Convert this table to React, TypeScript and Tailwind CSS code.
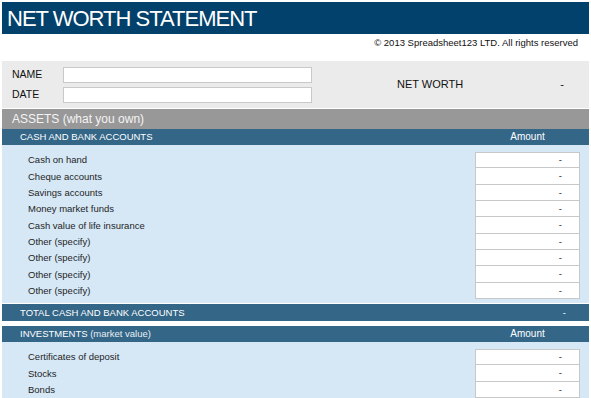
import React from "react";

const cashRows = [
  "Cash on hand",
  "Cheque accounts",
  "Savings accounts",
  "Money market funds",
  "Cash value of life insurance",
  "Other (specify)",
  "Other (specify)",
  "Other (specify)",
  "Other (specify)",
];

const invRows = ["Certificates of deposit", "Stocks", "Bonds"];

function Row({ label, first }: { label: string; first: boolean }) {
  return (
    <div className="flex h-[16.33px] items-center justify-between">
      <span className="pl-[26px] text-[9.5px] leading-none text-[#1e1e1e]">{label}</span>
      <div
        className={
          "mr-[9px] flex h-full w-[105px] items-center justify-end border-x border-b border-[#c8c8c8] bg-white pr-[17px] text-[9.5px] leading-none text-[#222] " +
          (first ? "border-t" : "")
        }
      >
        -
      </div>
    </div>
  );
}

export default function App() {
  return (
    <div className="h-[398px] w-[591px] overflow-hidden bg-white font-['Liberation_Sans',Arial,sans-serif]">
      <div className="px-[2px] pt-[2px]">
        <div className="flex h-[32px] items-center bg-[#02416b] pl-[5px] text-[22px] tracking-[-1px] text-white">
          NET WORTH STATEMENT
        </div>
        <div className="flex h-[27px] justify-end pr-[11px] pt-[3px] text-[9.5px] leading-[12px] text-[#111]">
          © 2013 Spreadsheet123 LTD. All rights reserved
        </div>
        <div className="flex h-[47px] items-center bg-[#ebebeb] pl-[10px]">
          <div className="flex flex-col gap-[4px]">
            <div className="flex items-center">
              <span className="w-[51px] text-[10.5px] leading-none text-[#111]">NAME</span>
              <div className="h-[16px] w-[249px] border border-[#c9c9c9] bg-white" />
            </div>
            <div className="flex items-center">
              <span className="w-[51px] text-[10.5px] leading-none text-[#111]">DATE</span>
              <div className="h-[16px] w-[249px] border border-[#c9c9c9] bg-white" />
            </div>
          </div>
          <span className="ml-[85px] text-[11px] leading-none text-[#111]">NET WORTH</span>
          <span className="ml-auto pr-[25px] text-[11px] leading-none text-[#111]">-</span>
        </div>
        <div className="mt-[1px] flex h-[20px] items-center bg-[#989898] pl-[10px] text-[12px] leading-none text-[#f4f4f4]">
          ASSETS (what you own)
        </div>
        <div className="flex h-[16px] items-center justify-between bg-[#336687] text-[9.5px] leading-none text-white">
          <span className="pl-[18px]">CASH AND BANK ACCOUNTS</span>
          <span className="mr-[9px] w-[105px] text-center text-[10px]">Amount</span>
        </div>
        <div className="bg-[#d6e8f6] pb-[4px] pt-[7px]">
          {cashRows.map((r, i) => (
            <Row key={i} label={r} first={i === 0} />
          ))}
        </div>
        <div className="mt-[1px] flex h-[17px] items-center justify-between bg-[#336687] text-[9.5px] leading-none text-white">
          <span className="pl-[18px]">TOTAL CASH AND BANK ACCOUNTS</span>
          <span className="pr-[23px]">-</span>
        </div>
        <div className="h-[5px]" />
        <div className="flex h-[16px] items-center justify-between bg-[#336687] text-[9.5px] leading-none text-white">
          <span className="pl-[18px]">
            INVESTMENTS <span className="text-[#e8eef3]">(market value)</span>
          </span>
          <span className="mr-[9px] w-[105px] text-center text-[10px]">Amount</span>
        </div>
        <div className="bg-[#d6e8f6] pb-[4px] pt-[7px]">
          {invRows.map((r, i) => (
            <Row key={i} label={r} first={i === 0} />
          ))}
        </div>
      </div>
    </div>
  );
}
